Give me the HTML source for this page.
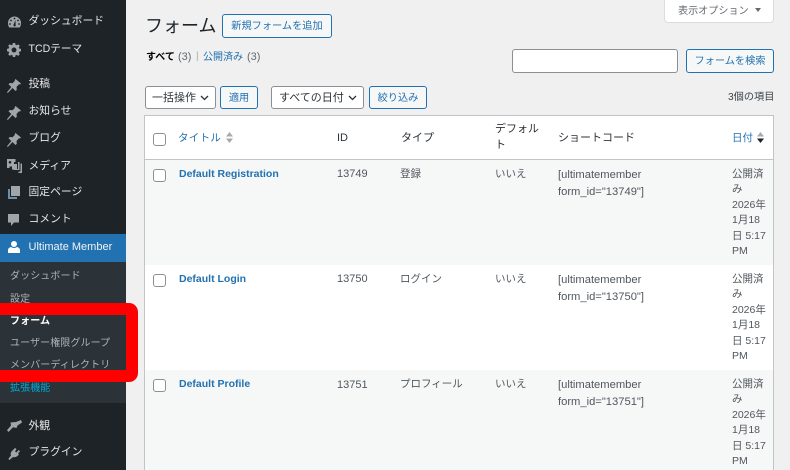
<!DOCTYPE html>
<html lang="ja"><head><meta charset="utf-8"><style>
html,body{margin:0;padding:0;width:790px;height:470px;overflow:hidden}
body{position:relative;background:#f0f0f1;font-family:"Liberation Sans","Noto Sans CJK JP",sans-serif;font-size:11px;color:#50575e}
#root{position:absolute;left:0;top:0;width:790px;height:470px;overflow:hidden}
.a{position:absolute;white-space:nowrap;line-height:16px}
#side{position:absolute;left:0;top:0;width:126px;height:470px;background:#1d2327}
#sub{position:absolute;left:0;top:262px;width:126px;height:141px;background:#2c3338}
#cur{position:absolute;left:0;top:234px;width:126px;height:28px;background:#2271b1}
.m{color:#e6e7e8;left:28.5px;font-size:10.8px}
.s{color:#aeb3b8;left:10px;font-size:10px;letter-spacing:.1px}
svg.i{position:absolute;fill:#a0a5aa}
.btn{position:absolute;box-sizing:border-box;border:1px solid #2271b1;border-radius:3px;background:#f6f7f7;color:#2271b1;text-align:center;font-size:10.2px;white-space:nowrap}
.sel{position:absolute;box-sizing:border-box;border:1px solid #8c8f94;border-radius:3px;background:#fff;color:#2c3338;font-size:11px;white-space:nowrap}
.sel svg{position:absolute;right:6px;top:8px;width:9px;height:6px}
.cb{position:absolute;box-sizing:border-box;left:153px;width:13px;height:13px;border:1px solid #8c8f94;border-radius:3px;background:#fff}
.l{color:#2271b1}
.t{color:#2271b1;font-weight:bold;font-size:10.5px;left:179px}
.d{left:732px;line-height:15.4px;font-size:10.5px;color:#50575e}
.h{color:#2c3338;font-size:11px}
.c{font-size:10.5px}
.n{font-size:11px;left:337px}
.sc{left:558px;font-size:11.2px;line-height:16.6px}
</style></head><body><div id="root">
<div id="side"></div><div id="sub"></div><div id="cur"></div>

<svg class="i" style="left:8px;top:16px" width="13" height="12" viewBox="0 0 13 12"><path d="M6.500 0.500A6.500 6.500 0 0 0 0 7c0 1.700.4 3.100 1.200 4.500h10.600C12.600 10.100 13 8.700 13 7A6.500 6.500 0 0 0 6.500.500z"/><g fill="#1d2327"><circle cx="6.500" cy="2.500" r=".9"/><circle cx="3" cy="4.500" r=".9"/><circle cx="10" cy="4.500" r=".9"/><circle cx="2" cy="8" r=".9"/><circle cx="11" cy="8" r=".9"/><path d="M7.500 4L7.600 8.500a1.200 1.200 0 1 1-2 0z"/></g></svg>
<svg class="i" style="left:7px;top:43px" width="14" height="14" viewBox="0 0 16 16"><path fill-rule="evenodd" d="M6.700 0h2.600l.4 2 1.300.6 1.800-1.100 1.800 1.800-1.100 1.800.6 1.300 2 .4v2.600l-2 .4-.6 1.300 1.100 1.800-1.800 1.800-1.800-1.100-1.300.6-.4 2H6.700l-.4-2-1.300-.6-1.800 1.100-1.800-1.800 1.100-1.800-.6-1.300-2-.4V6.700l2-.4.6-1.300-1.100-1.800 1.800-1.800 1.800 1.100 1.300-.6zM8 5.200a2.800 2.800 0 1 0 0 5.600 2.800 2.800 0 0 0 0-5.600z"/></svg>
<svg class="i" style="left:7px;top:79px" width="14" height="14" viewBox="0 0 14 14"><path d="M8.500 0L14 4.500l-1 1-1-.2L9.500 8l.3 2.800L8.500 12 5.500 9 .8 14 0 13.300 4.300 8 1.500 5.300 2.800 4l2.700.3L7.800 2 7.700 1z"/></svg>
<svg class="i" style="left:7px;top:106px" width="14" height="14" viewBox="0 0 14 14"><path d="M8.500 0L14 4.500l-1 1-1-.2L9.500 8l.3 2.800L8.500 12 5.500 9 .8 14 0 13.300 4.300 8 1.500 5.300 2.800 4l2.700.3L7.800 2 7.700 1z"/></svg>
<svg class="i" style="left:7px;top:133px" width="14" height="14" viewBox="0 0 14 14"><path d="M8.500 0L14 4.500l-1 1-1-.2L9.500 8l.3 2.800L8.500 12 5.500 9 .8 14 0 13.300 4.300 8 1.500 5.300 2.800 4l2.700.3L7.800 2 7.700 1z"/></svg>
<svg class="i" style="left:7px;top:159px" width="15" height="14" viewBox="0 0 15 14"><path fill-rule="evenodd" d="M0 0h8.500v3H7v2h3v5.500H5V7.500H2.500V9H0zM3 2a1.300 1.300 0 1 0 0 2.600A1.300 1.300 0 0 0 3 2z"/><path d="M11 3h1.500v8H6.500v-1H11zM13.500 4.500H15V14h-3.500v-1.500h2z"/></svg>
<svg class="i" style="left:8px;top:186px" width="12" height="13" viewBox="0 0 12 13"><path d="M3 0h9v10H3z"/><path d="M0 3h2v8h7v2H0z" style="fill:#6f8fa8"/></svg>
<svg class="i" style="left:8px;top:214px" width="11" height="12" viewBox="0 0 11 12"><path d="M0 0h11v8.500H6L3 12V8.500H0z"/></svg>
<svg class="i" style="left:8px;top:241px;fill:#fff" width="12" height="12" viewBox="0 0 12 12"><circle cx="6" cy="3" r="3"/><path d="M0 12V9c0-1.500 1.500-2.600 3-3 .8.600 1.800 1 3 1s2.200-.4 3-1c1.500.4 3 1.500 3 3v3z"/></svg>
<svg class="i" style="left:7px;top:420px" width="15" height="12" viewBox="0 0 15 12"><path d="M9 2L14 0l1 2.500-4.500 3L9.500 8l-3.500-.8L1.500 12 0 10.300 4 5.500 3.500 2.500z"/></svg>
<svg class="i" style="left:8px;top:448px" width="12" height="12" viewBox="0 0 12 12"><path d="M7 0l1.500 1L7 3.500 8.500 4.500 10.500 2 12 3.200l-2 2.300 1 .8-1 1.200C8.500 9 6.500 9.500 5 9L1.500 12 .3 11 3 7.500c-.7-1.500-.3-3.200 1-4.500l1-1z"/></svg>

<div class="a m" style="top:13px">ダッシュボード</div>
<div class="a m" style="top:41px;font-size:10.6px">TCDテーマ</div>
<div class="a m" style="top:76px">投稿</div>
<div class="a m" style="top:103px">お知らせ</div>
<div class="a m" style="top:130px">ブログ</div>
<div class="a m" style="top:158px">メディア</div>
<div class="a m" style="top:184px">固定ページ</div>
<div class="a m" style="top:211px">コメント</div>
<div class="a m" style="top:239px;color:#f0f4f8;font-size:11px">Ultimate Member</div>
<div class="a s" style="top:269px">ダッシュボード</div>
<div class="a s" style="top:292px">設定</div>
<div class="a s" style="top:314px;color:#fff;font-weight:bold">フォーム</div>
<div class="a s" style="top:336px">ユーザー権限グループ</div>
<div class="a s" style="top:358px">メンバーディレクトリ</div>
<div class="a s" style="top:381px;color:#00a9d8">拡張機能</div>
<div class="a m" style="top:418px">外観</div>
<div class="a m" style="top:444px">プラグイン</div>

<div style="position:absolute;box-sizing:border-box;left:-20px;top:303px;width:158px;height:79px;border:12px solid #f00;border-radius:9px"></div>

<div style="position:absolute;box-sizing:border-box;left:664px;top:-4px;width:110px;height:27px;background:#fff;border:1px solid #dcdcde;border-radius:0 0 4px 4px"></div>
<div class="a" style="left:678px;top:4px;font-size:10.1px;color:#646970">表示オプション</div>
<svg style="position:absolute;left:755px;top:8px" width="6" height="5" viewBox="0 0 6 5"><path d="M0 0h6L3 4z" fill="#646970"/></svg>

<div class="a" style="left:145px;top:13px;font-size:18px;line-height:26px;color:#1d2327">フォーム</div>
<div class="btn" style="left:222px;top:14px;width:110px;height:24px;line-height:24px">新規フォームを追加</div>
<div class="a" style="left:146px;top:50px;font-size:10px"><b style="color:#000">すべて</b></div>
<div class="a" style="left:178px;top:49px;font-size:11px;color:#646970">(3)</div>
<div class="a" style="left:196px;top:49px;font-size:10px;color:#a7aaad">|</div>
<div class="a l" style="left:203px;top:50px;font-size:10px">公開済み</div>
<div class="a" style="left:247px;top:49px;font-size:11px;color:#646970">(3)</div>

<div style="position:absolute;box-sizing:border-box;left:512px;top:49px;width:166px;height:24px;background:#fff;border:1px solid #8c8f94;border-radius:3px"></div>
<div class="btn" style="left:686px;top:49px;width:88px;height:24px;line-height:24px">フォームを検索</div>

<div class="sel" style="left:145px;top:86px;width:71px;height:23px;line-height:22px;padding-left:6px">一括操作<svg viewBox="0 0 9 6"><path d="M1 1l3.500 3.500L8 1" fill="none" stroke="#2c3338" stroke-width="1.300"/></svg></div>
<div class="btn" style="left:220px;top:86px;width:38px;height:23px;line-height:23px">適用</div>
<div class="sel" style="left:271px;top:86px;width:93px;height:23px;line-height:22px;padding-left:7px">すべての日付<svg viewBox="0 0 9 6"><path d="M1 1l3.500 3.500L8 1" fill="none" stroke="#2c3338" stroke-width="1.300"/></svg></div>
<div class="btn" style="left:369px;top:86px;width:58px;height:23px;line-height:23px">絞り込み</div>
<div class="a" style="left:728px;top:90px;font-size:10.2px;color:#3c434a">3個の項目</div>

<div style="position:absolute;box-sizing:border-box;left:144px;top:115px;width:630px;height:370px;background:#fff;border:1px solid #c3c4c7"></div>
<div style="position:absolute;left:145px;top:159px;width:628px;height:1px;background:#c3c4c7"></div>
<div style="position:absolute;left:145px;top:160px;width:628px;height:105px;background:#f6f7f7"></div>
<div style="position:absolute;left:145px;top:370px;width:628px;height:105px;background:#f6f7f7"></div>

<div class="cb" style="top:133px"></div>
<div class="a l" style="left:178px;top:130px;font-size:10.5px;letter-spacing:.3px">タイトル</div>
<svg style="position:absolute;left:226px;top:132px" width="7" height="11" viewBox="0 0 7 11"><path d="M3.500 0L7 4.500H0zM3.500 11L0 6.500h7z" fill="#a7aaad"/></svg>
<div class="a h" style="left:337px;top:130px">ID</div>
<div class="a h" style="left:401px;top:130px">タイプ</div>
<div class="a h" style="left:495px;top:121px">デフォル</div>
<div class="a h" style="left:495px;top:137px">ト</div>
<div class="a h" style="left:558px;top:130px">ショートコード</div>
<div class="a l" style="left:732px;top:130px;font-size:10.5px">日付</div>
<svg style="position:absolute;left:757px;top:132px" width="7" height="11" viewBox="0 0 7 11"><path d="M3.500 0L7 4.500H0z" fill="#a7aaad"/><path d="M3.500 11L0 6.500h7z" fill="#1d2327"/></svg>

<div class="cb" style="top:169px"></div>
<div class="a t" style="top:166px">Default Registration</div>
<div class="a n" style="top:166px">13749</div>
<div class="a c" style="left:400px;top:166px">登録</div>
<div class="a c" style="left:495px;top:166px">いいえ</div>
<div class="a sc" style="top:167px">[ultimatemember<br>form_id="13749"]</div>
<div class="a d" style="top:167px">公開済<br>み<br>2026年<br>1月18<br>日 5:17<br>PM</div>

<div class="cb" style="top:274px"></div>
<div class="a t" style="top:271px">Default Login</div>
<div class="a n" style="top:271px">13750</div>
<div class="a c" style="left:400px;top:271px">ログイン</div>
<div class="a c" style="left:495px;top:271px">いいえ</div>
<div class="a sc" style="top:272px">[ultimatemember<br>form_id="13750"]</div>
<div class="a d" style="top:272px">公開済<br>み<br>2026年<br>1月18<br>日 5:17<br>PM</div>

<div class="cb" style="top:379px"></div>
<div class="a t" style="top:376px">Default Profile</div>
<div class="a n" style="top:377px">13751</div>
<div class="a c" style="left:400px;top:376px">プロフィール</div>
<div class="a c" style="left:495px;top:376px">いいえ</div>
<div class="a sc" style="top:377px">[ultimatemember<br>form_id="13751"]</div>
<div class="a d" style="top:377px">公開済<br>み<br>2026年<br>1月18<br>日 5:17<br>PM</div>
</div></body></html>
